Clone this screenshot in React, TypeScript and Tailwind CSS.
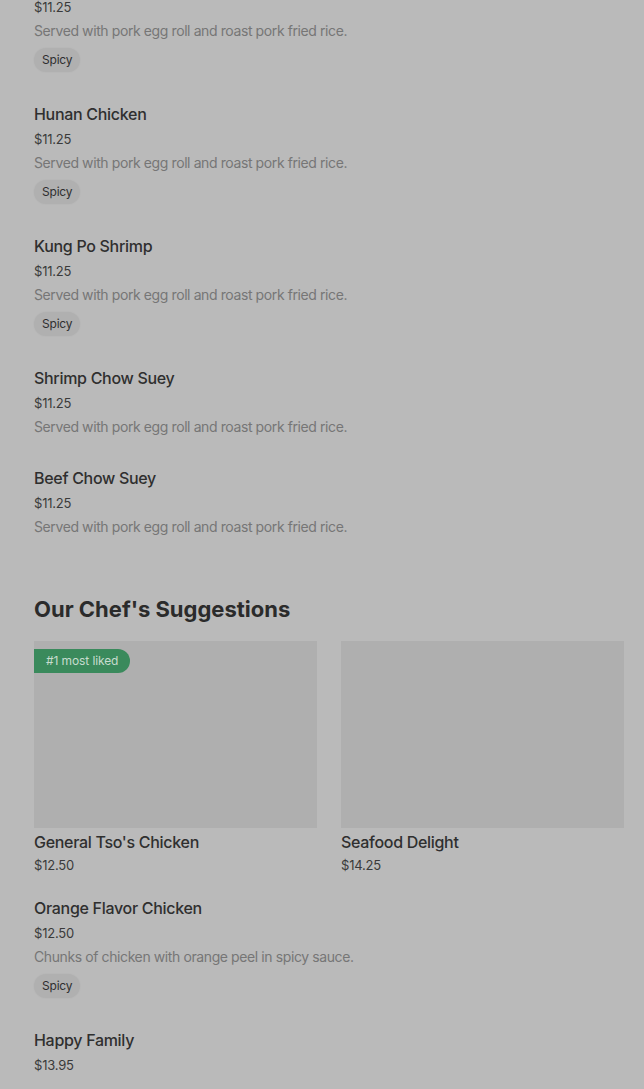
import React from "react";

type Item = { name?: string; price: string; desc?: string; spicy?: boolean };

const before: Item[] = [
  { price: "$11.25", desc: "Served with pork egg roll and roast pork fried rice.", spicy: true },
  { name: "Hunan Chicken", price: "$11.25", desc: "Served with pork egg roll and roast pork fried rice.", spicy: true },
  { name: "Kung Po Shrimp", price: "$11.25", desc: "Served with pork egg roll and roast pork fried rice.", spicy: true },
  { name: "Shrimp Chow Suey", price: "$11.25", desc: "Served with pork egg roll and roast pork fried rice." },
  { name: "Beef Chow Suey", price: "$11.25", desc: "Served with pork egg roll and roast pork fried rice." },
];

const after: Item[] = [
  { name: "Orange Flavor Chicken", price: "$12.50", desc: "Chunks of chicken with orange peel in spicy sauce.", spicy: true },
  { name: "Happy Family", price: "$13.95" },
];

function MenuItem({ item }: { item: Item }) {
  return (
    <div className="pb-[27px]">
      {item.name && (
        <div className="text-[16px] leading-[24px] font-medium tracking-[-0.3px] text-[#2f2f2f]">{item.name}</div>
      )}
      <div className={(item.name ? "mt-[1px] " : "") + "text-[13px] leading-[24px] tracking-[-0.2px] text-[#3a3a3a]"}>
        {item.price}
      </div>
      {item.desc && (
        <div className="text-[14px] leading-[24px] tracking-[-0.4px] text-[#767676]">{item.desc}</div>
      )}
      {item.spicy && (
        <div className="mt-[5px] mb-[3px] flex">
          <span className="h-[24px] px-[8px] rounded-full bg-[#b0b0b0] text-[12px] leading-[24px] tracking-[-0.2px] text-[#2f2f2f] shadow-[0_0_2px_rgba(0,0,0,0.05)]">
            Spicy
          </span>
        </div>
      )}
    </div>
  );
}

function Card({ name, price, badge }: { name: string; price: string; badge?: boolean }) {
  return (
    <div className="w-[283px] shrink-0">
      <div className="relative h-[187px] bg-[#afafaf]">
        {badge && (
          <span className="absolute left-0 top-[8px] h-[24px] pl-[12px] pr-[12px] rounded-r-full bg-[#3a8a5c] text-[12px] leading-[24px] tracking-[-0.1px] text-[#c7dccf]">
            #1 most liked
          </span>
        )}
      </div>
      <div className="mt-[3px] text-[16px] leading-[22px] font-medium tracking-[-0.3px] text-[#2f2f2f]">{name}</div>
      <div className="text-[13px] leading-[24px] tracking-[-0.2px] text-[#3a3a3a]">{price}</div>
    </div>
  );
}

export default function App() {
  return (
    <div
      className="h-[1089px] overflow-hidden bg-[#bababa]"
      style={{ fontFamily: "Inter, 'Liberation Sans', sans-serif" }}
    >
      <div className="-mt-[5px] pl-[34px] pr-[20px]">
        {before.map((it, i) => (
          <MenuItem key={i} item={it} />
        ))}
        <h2 className="pt-[27px] text-[22px] leading-[32px] font-bold text-[#2b2b2b]">
          Our Chef's Suggestions
        </h2>
        <div className="mt-4 flex gap-6">
          <Card name="General Tso's Chicken" price="$12.50" badge />
          <Card name="Seafood Delight" price="$14.25" />
        </div>
        <div className="mt-[19px]">
          {after.map((it, i) => (
            <MenuItem key={i} item={it} />
          ))}
        </div>
      </div>
    </div>
  );
}
